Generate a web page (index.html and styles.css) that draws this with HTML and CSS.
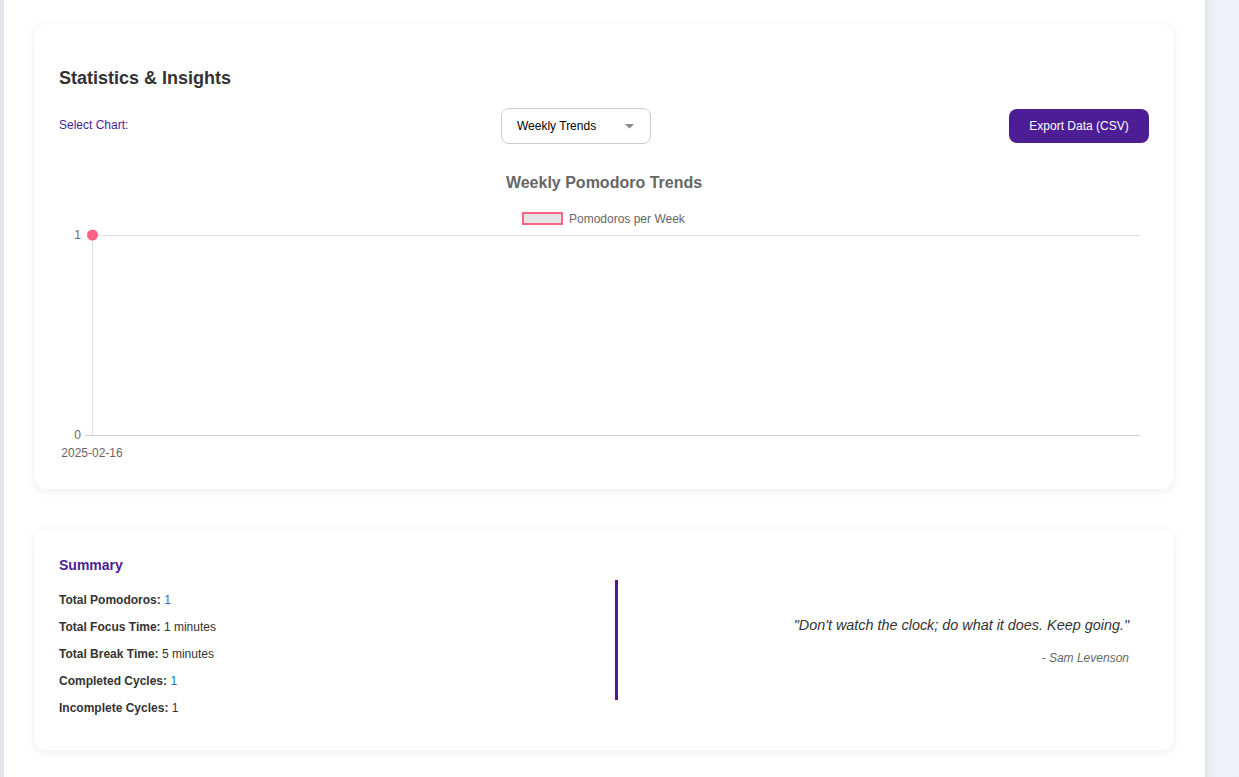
FILE: index.html
```html
<!DOCTYPE html>
<html lang="en">
<head>
<meta charset="utf-8">
<title>Statistics &amp; Insights</title>
<link rel="stylesheet" href="styles.css">
</head>
<body>
<div class="layout">
  <div class="edge"></div>
  <main class="main">
    <section class="card stats">
      <h2 class="title">Statistics &amp; Insights</h2>
      <div class="controls">
        <label class="sel-label">Select Chart:</label>
        <div class="select">
          <span>Weekly Trends</span>
          <svg class="caret" width="9" height="5" viewBox="0 0 9 5"><path d="M0 0H9L4.5 4.5Z" fill="#888"/></svg>
        </div>
        <button class="export">Export Data (CSV)</button>
      </div>
      <div class="chart">
        <svg width="1090" height="300" viewBox="0 0 1090 300" font-family="Liberation Sans, Arial, sans-serif">
          <text x="545" y="22" text-anchor="middle" font-size="16" font-weight="bold" fill="#666">Weekly Pomodoro Trends</text>
          <rect x="464" y="47" width="39" height="11" fill="#e5e5e5" stroke="#ff6384" stroke-width="2"/>
          <text x="510" y="57" font-size="12" fill="#666">Pomodoros per Week</text>
          <line x1="33.5" y1="69" x2="33.5" y2="269" stroke="#e0e0e0" stroke-width="1"/>
          <line x1="33" y1="69.5" x2="1081" y2="69.5" stroke="#e0e0e0" stroke-width="1"/>
          <line x1="26" y1="269.5" x2="1081" y2="269.5" stroke="#cfcfcf" stroke-width="1"/>
          <text x="22" y="73" font-size="12" text-anchor="end" fill="#666">1</text>
          <text x="22" y="273" font-size="12" text-anchor="end" fill="#666">0</text>
          <text x="33" y="291" font-size="12" text-anchor="middle" fill="#666">2025-02-16</text>
          <circle cx="33.5" cy="69" r="5.5" fill="#ff6384"/>
        </svg>
      </div>
    </section>

    <section class="card summary">
      <div class="sum-left">
        <h3 class="sum-title">Summary</h3>
        <p class="row"><b>Total Pomodoros:</b> <span class="blue">1</span></p>
        <p class="row"><b>Total Focus Time:</b> 1 minutes</p>
        <p class="row"><b>Total Break Time:</b> 5 minutes</p>
        <p class="row"><b>Completed Cycles:</b> <span class="blue">1</span></p>
        <p class="row"><b>Incomplete Cycles:</b> 1</p>
      </div>
      <div class="quote">
        <p class="q-text">"Don't watch the clock; do what it does. Keep going."</p>
        <p class="q-author">- Sam Levenson</p>
      </div>
    </section>
  </main>
  <div class="side"></div>
</div>
</body>
</html>
```

FILE: styles.css
```css
* { box-sizing: border-box; }
html, body { margin: 0; padding: 0; }
body {
  font-family: "Liberation Sans", Arial, sans-serif;
  background: #eef1f6;
  color: #333;
  height: 777px;
  overflow: hidden;
}
.layout {
  display: flex;
  height: 777px;
}
.edge {
  width: 4px;
  background: #e3e6ec;
  flex: none;
}
.main {
  width: 1201px;
  flex: none;
  background: #fff;
  padding: 24px 31px 0 30px;
  display: flex;
  flex-direction: column;
  gap: 40px;
}
.side {
  flex: 1;
  background: linear-gradient(90deg, #e4e8ee 0, #edf0f5 8px, #eef1f6 100%);
}
.card {
  background: #fff;
  border-radius: 12px;
  box-shadow: 0 2px 10px rgba(0,0,0,0.08);
}
.stats {
  height: 465px;
  padding: 43px 25px 0 25px;
}
.title {
  margin: 0;
  font-size: 18px;
  font-weight: bold;
  color: #333;
  line-height: 22px;
}
.controls {
  display: flex;
  align-items: center;
  justify-content: space-between;
  margin-top: 19px;
}
.sel-label {
  font-size: 12px;
  color: #4c1d95;
  width: 84px;
  margin-top: -2px;
}
.select {
  width: 150px;
  height: 36px;
  border: 1px solid #ccc;
  border-radius: 8px;
  display: flex;
  align-items: center;
  justify-content: space-between;
  padding: 0 16px 0 15px;
  font-size: 12px;
  color: #000;
}
.caret { display: block; }
.export {
  width: 140px;
  height: 34px;
  border: none;
  border-radius: 8px;
  background: #4c1d95;
  color: #fff;
  font-family: "Liberation Sans", Arial, sans-serif;
  font-size: 12px;
  padding: 0;
}
.chart {
  margin-top: 22px;
}
.chart svg { display: block; }
.summary {
  height: 221px;
  padding: 28px 25px 0 25px;
  display: grid;
  grid-template-columns: 534px 1fr;
  column-gap: 22px;
  align-items: start;
}
.sum-title {
  margin: 0 0 20px;
  font-size: 14px;
  font-weight: bold;
  color: #4c1d95;
  line-height: 16px;
}
.row {
  margin: 0;
  font-size: 12px;
  line-height: 14px;
  color: #333;
}
.row + .row { margin-top: 13px; }
.row b { color: #333; }
.blue { color: #2a6cc0; }
.quote {
  margin-top: 23px;
  height: 120px;
  border-left: 3px solid #4c1d95;
  display: flex;
  flex-direction: column;
  justify-content: center;
  align-items: flex-end;
  padding-right: 20px;
  padding-top: 2px;
}
.q-text {
  margin: 0;
  font-size: 14.4px;
  font-style: italic;
  color: #333;
  line-height: 16px;
}
.q-author {
  margin: 18px 0 0;
  font-size: 12px;
  font-style: italic;
  color: #666;
  line-height: 14px;
}
```
